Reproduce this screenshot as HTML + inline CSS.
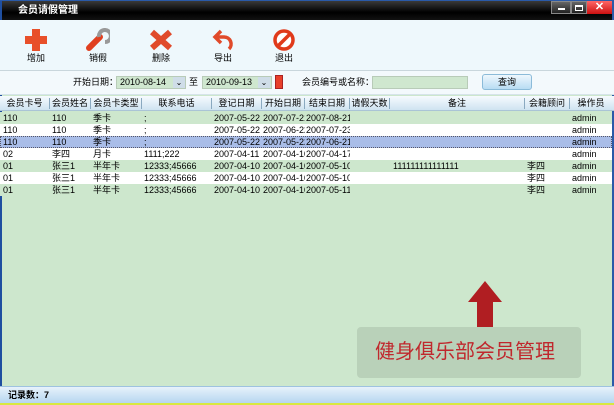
<!DOCTYPE html>
<html><head><meta charset="utf-8"><style>
*{margin:0;padding:0;box-sizing:border-box}
body{width:614px;height:405px;overflow:hidden;background:#cde7cd;font-family:"Liberation Sans","Noto Sans CJK SC",sans-serif;font-size:9px;line-height:11px;color:#000;position:relative}
.abs{position:absolute}
#title{left:0;top:0;width:614px;height:20px;background:linear-gradient(#3a3a3a,#000 60%,#111);border-top:1px solid #2a5aa8;color:#fff;font-size:10px;font-weight:bold;padding:4px 0 0 18px}
#tb{left:0;top:20px;width:614px;height:51px;background:#eef8fc;border-bottom:1px solid #c9d6dc}
.tbi{position:absolute;top:33px;width:40px;text-align:center;font-size:9px}
#fb{left:0;top:71px;width:614px;height:24px;background:#f3f9fc;border-bottom:1px solid #d6e4ea}
.inp{position:absolute;height:13px;background:#cfe7cf;border:1px solid #b8cbb8;font-size:9px;padding:0 3px;line-height:11px}
#hdr{left:0;top:96px;width:614px;height:15px;background:linear-gradient(#f6fbfe,#cfe3f1);border-bottom:1px solid #aac4d6}
.h{position:absolute;top:2px;text-align:center;border-right:1px solid #8aa9c0;height:11px;line-height:11px}
.row{position:absolute;left:0;width:612px;height:12px}
.c{position:absolute;top:0;line-height:12px;height:12px;white-space:nowrap;overflow:hidden}
#status{left:0;top:386px;width:614px;height:17px;background:linear-gradient(#e7f2fb,#b6d6f0);border-top:1px solid #9ec2e0;padding:3px 0 0 8px;font-weight:bold}
</style></head><body>
<div id="title" class="abs">会员请假管理
<div class="abs" style="left:551px;top:0;width:20px;height:13px;background:linear-gradient(#666,#222);border:1px solid #888"><div style="margin:6px 6px;width:7px;height:2px;background:#fff"></div></div>
<div class="abs" style="left:571px;top:0;width:16px;height:13px;background:linear-gradient(#666,#222);border:1px solid #888"><div style="margin:3px 3px;width:8px;height:6px;border:1px solid #fff;border-top-width:2px"></div></div>
<div class="abs" style="left:587px;top:0;width:25px;height:13px;background:linear-gradient(#f66,#c11);color:#fff;text-align:center;font-size:11px;line-height:12px">✕</div>
</div>
<div class="abs" style="left:0;top:1px;width:2px;height:402px;background:#1f4fa0"></div>
<div class="abs" style="left:612px;top:1px;width:2px;height:402px;background:#2a5aa8"></div>
<div class="abs" style="left:0;top:403px;width:614px;height:2px;background:#d8e840"></div>
<div id="tb" class="abs">
<svg class="abs" style="left:24px;top:8px" width="24" height="24"><path d="M8 1h8v7h7v8h-7v7H8v-7H1V8h7z" fill="#e8502a"/></svg>
<div class="tbi" style="left:16px">增加</div>
<svg class="abs" style="left:86px;top:8px" width="24" height="24"><path d="M3 20l11-11" stroke="#e04020" stroke-width="6" stroke-linecap="round"/><path d="M13 9a6 6 0 1 1 6 5" stroke="#999" stroke-width="4" fill="none"/></svg>
<div class="tbi" style="left:78px">销假</div>
<svg class="abs" style="left:149px;top:9px" width="24" height="22"><path d="M3 3l18 16M21 3L3 19" stroke="#e04a2a" stroke-width="6"/></svg>
<div class="tbi" style="left:141px">删除</div>
<svg class="abs" style="left:212px;top:8px" width="24" height="24"><path d="M9 3L3 9l6 6M3 9h9a7 7 0 0 1 5 12" stroke="#e04a2a" stroke-width="3.5" fill="none"/></svg>
<div class="tbi" style="left:203px">导出</div>
<svg class="abs" style="left:272px;top:8px" width="24" height="24"><circle cx="12" cy="12" r="9" stroke="#e03a1a" stroke-width="3.5" fill="#fff"/><path d="M6 18L18 6" stroke="#e03a1a" stroke-width="3.5"/></svg>
<div class="tbi" style="left:264px">退出</div>
</div>
<div id="fb" class="abs">
<div class="abs" style="left:73px;top:6px">开始日期：</div>
<div class="inp" style="left:116px;top:5px;width:70px">2010-08-14</div>
<div class="abs" style="left:173px;top:6px;width:12px;height:11px;background:#cfdde8;text-align:center;font-size:8px">⌄</div>
<div class="abs" style="left:189px;top:6px">至</div>
<div class="inp" style="left:202px;top:5px;width:70px">2010-09-13</div>
<div class="abs" style="left:258px;top:6px;width:12px;height:11px;background:#cfdde8;text-align:center;font-size:8px">⌄</div>
<div class="abs" style="left:275px;top:4px;width:8px;height:14px;background:#e8402a;border:1px solid #a22"></div>
<div class="abs" style="left:302px;top:6px">会员编号或名称：</div>
<div class="inp" style="left:372px;top:5px;width:96px"></div>
<div class="abs" style="left:482px;top:3px;width:50px;height:16px;border-radius:3px;background:linear-gradient(#eef7fd,#b8dcf3);border:1px solid #8bbbd9;text-align:center;padding-top:2px">查询</div>
</div>
<div id="hdr" class="abs">
<div class="h" style="left:0;width:50px">会员卡号</div>
<div class="h" style="left:50px;width:41px">会员姓名</div>
<div class="h" style="left:91px;width:51px">会员卡类型</div>
<div class="h" style="left:142px;width:70px">联系电话</div>
<div class="h" style="left:212px;width:50px">登记日期</div>
<div class="h" style="left:262px;width:43px">开始日期</div>
<div class="h" style="left:305px;width:45px">结束日期</div>
<div class="h" style="left:350px;width:40px">请假天数</div>
<div class="h" style="left:390px;width:135px">备注</div>
<div class="h" style="left:525px;width:45px">会籍顾问</div>
<div class="h" style="left:570px;width:42px;border:none">操作员</div>
</div>
<div class="row" style="top:112px;background:#cde7cd"><span class="c" style="left:3px">110</span><span class="c" style="left:52px">110</span><span class="c" style="left:93px">季卡</span><span class="c" style="left:144px">;</span><span class="c" style="left:214px;width:48px">2007-05-22</span><span class="c" style="left:263px;width:42px">2007-07-21</span><span class="c" style="left:306px;width:44px">2007-08-21</span><span class="c" style="left:572px">admin</span></div>
<div class="row" style="top:124px;background:#fff"><span class="c" style="left:3px">110</span><span class="c" style="left:52px">110</span><span class="c" style="left:93px">季卡</span><span class="c" style="left:144px">;</span><span class="c" style="left:214px;width:48px">2007-05-22</span><span class="c" style="left:263px;width:42px">2007-06-22</span><span class="c" style="left:306px;width:44px">2007-07-23</span><span class="c" style="left:572px">admin</span></div>
<div class="row" style="top:136px;background:#a9bde8;outline:1px dotted #556;outline-offset:-1px"><span class="c" style="left:3px">110</span><span class="c" style="left:52px">110</span><span class="c" style="left:93px">季卡</span><span class="c" style="left:144px">;</span><span class="c" style="left:214px;width:48px">2007-05-22</span><span class="c" style="left:263px;width:42px">2007-05-22</span><span class="c" style="left:306px;width:44px">2007-06-21</span><span class="c" style="left:572px">admin</span></div>
<div class="row" style="top:148px;background:#fff"><span class="c" style="left:3px">02</span><span class="c" style="left:52px">李四</span><span class="c" style="left:93px">月卡</span><span class="c" style="left:144px">1111;222</span><span class="c" style="left:214px;width:48px">2007-04-11</span><span class="c" style="left:263px;width:42px">2007-04-10</span><span class="c" style="left:306px;width:44px">2007-04-17</span><span class="c" style="left:572px">admin</span></div>
<div class="row" style="top:160px;background:#cde7cd"><span class="c" style="left:3px">01</span><span class="c" style="left:52px">张三1</span><span class="c" style="left:93px">半年卡</span><span class="c" style="left:144px">12333;45666</span><span class="c" style="left:214px;width:48px">2007-04-10</span><span class="c" style="left:263px;width:42px">2007-04-10</span><span class="c" style="left:306px;width:44px">2007-05-10</span><span class="c" style="left:393px">111111111111111</span><span class="c" style="left:527px">李四</span><span class="c" style="left:572px">admin</span></div>
<div class="row" style="top:172px;background:#fff"><span class="c" style="left:3px">01</span><span class="c" style="left:52px">张三1</span><span class="c" style="left:93px">半年卡</span><span class="c" style="left:144px">12333;45666</span><span class="c" style="left:214px;width:48px">2007-04-10</span><span class="c" style="left:263px;width:42px">2007-04-10</span><span class="c" style="left:306px;width:44px">2007-05-10</span><span class="c" style="left:527px">李四</span><span class="c" style="left:572px">admin</span></div>
<div class="row" style="top:184px;background:#cde7cd"><span class="c" style="left:3px">01</span><span class="c" style="left:52px">张三1</span><span class="c" style="left:93px">半年卡</span><span class="c" style="left:144px">12333;45666</span><span class="c" style="left:214px;width:48px">2007-04-10</span><span class="c" style="left:263px;width:42px">2007-04-10</span><span class="c" style="left:306px;width:44px">2007-05-11</span><span class="c" style="left:527px">李四</span><span class="c" style="left:572px">admin</span></div>
<svg class="abs" style="left:468px;top:281px" width="35" height="47"><path d="M17 0L34 21H25V46H9V21H0z" fill="#b01e22"/></svg>
<div class="abs" style="left:357px;top:327px;width:224px;height:51px;background:#b9d1b9;border-radius:4px;color:#c0282d;font-size:20px;line-height:28px;padding:11px 0 0 18px">健身俱乐部会员管理</div>
<div id="status" class="abs">记录数：7</div>
</body></html>
